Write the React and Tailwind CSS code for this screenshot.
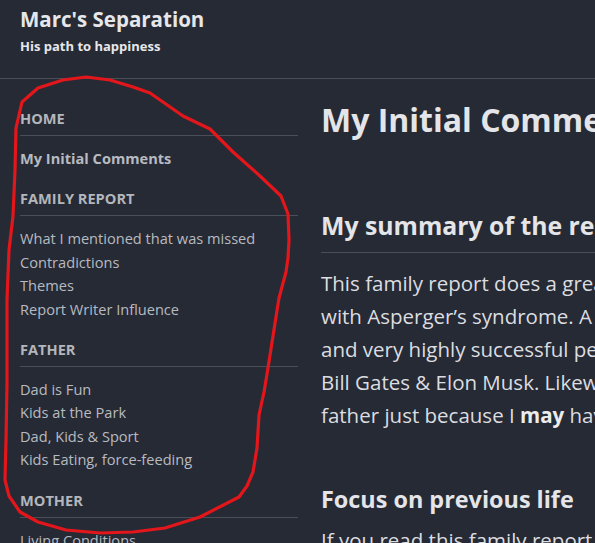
const nav = [
  { title: "HOME", items: ["My Initial Comments"], bold: true },
  {
    title: "FAMILY REPORT",
    items: ["What I mentioned that was missed", "Contradictions", "Themes", "Report Writer Influence"],
  },
  {
    title: "FATHER",
    items: ["Dad is Fun", "Kids at the Park", "Dad, Kids & Sport", "Kids Eating, force-feeding"],
  },
  { title: "MOTHER", items: ["Living Conditions", "Mum's Home"] },
];

// hand-drawn red loop around the sidebar
const loop =
  "M150 93 L183 116 L210 129 L233 152 L260 176 L281 196 L288 214 L289 240 L288 258 L286 272 L279 298 L273 336 L268 368 L264 392 L259 415 L257 448 L253 472 L247 486 L239 497 L200 517 L165 528 L133 532 L100 533 L66 530 L38 522 L20 512 L9 496 L5 480 L6 440 L7 383 L7 300 L9 250 L13 216 L15 170 L16 128 L22 102 L38 88 L63 80 L86 77 L110 80 L133 87 L150 93";

export default function App() {
  return (
    <div className="relative h-screen w-full overflow-hidden bg-[#262a34] font-['Open_Sans',sans-serif]">
      <header className="h-[79px] border-b border-[#4a4e58] px-5 pt-[5px]">
        <div className="text-[20.5px] font-bold leading-[28px] text-[#e6e7ea]">Marc's Separation</div>
        <div className="mt-[4px] text-[13px] font-bold leading-[18px] text-[#e6e7ea]">His path to happiness</div>
      </header>

      <div className="flex gap-[23px] px-5">
        <aside className="mt-[29px] w-[278px] shrink-0">
          {nav.map((sec, i) => (
            <div key={sec.title} className={i === 0 ? "" : "mt-[18px]"}>
              <div className="border-b border-[#4a4e58] pb-[7px] text-[14.6px] font-bold leading-[20px] text-[#b3b6bd]">
                {sec.title}
              </div>
              <ul className="pt-[11px]">
                {sec.items.map((it) => (
                  <li
                    key={it}
                    className={`text-[14.6px] leading-[23.4px] text-[#b7bac1] ${sec.bold ? "font-bold" : ""}`}
                  >
                    {it}
                  </li>
                ))}
              </ul>
            </div>
          ))}
        </aside>

        <main className="w-[800px] shrink-0 whitespace-nowrap text-[#e4e5e8]">
          <h1 className="mt-[21px] text-[32px] font-bold leading-[40px]">My Initial Comments</h1>
          <h2 className="mt-[68px] border-b border-[#4a4e58] pb-[10px] text-[24.8px] font-bold leading-[34px]">
            My summary of the report
          </h2>
          <p className="mt-[14px] text-[20.5px] leading-[33px] text-[#dcdde0]">
            This family report does a great job of portraying me as a person
            <br />
            with Asperger’s syndrome. A lot of people with Asperger’s are very
            <br />
            and very highly successful people, for example Albert Einstein,
            <br />
            Bill Gates &amp; Elon Musk. Likewise, I should not be judged as a poor
            <br />
            father just because I <b className="font-bold text-[#ececee]">may</b> have Asperger’s syndrome.
          </p>
          <h3 className="mt-[51px] text-[23.4px] font-bold leading-[32px]">Focus on previous life</h3>
          <p className="mt-[9px] text-[20.5px] leading-[33px] text-[#dcdde0]">
            If you read this family report you will see that it focuses on
          </p>
        </main>
      </div>

      <svg className="pointer-events-none absolute inset-0" width="595" height="543" viewBox="0 0 595 543">
        <path d={loop} fill="none" stroke="#e3161b" strokeWidth="3.2" strokeLinejoin="round" strokeLinecap="round" />
      </svg>
    </div>
  );
}
